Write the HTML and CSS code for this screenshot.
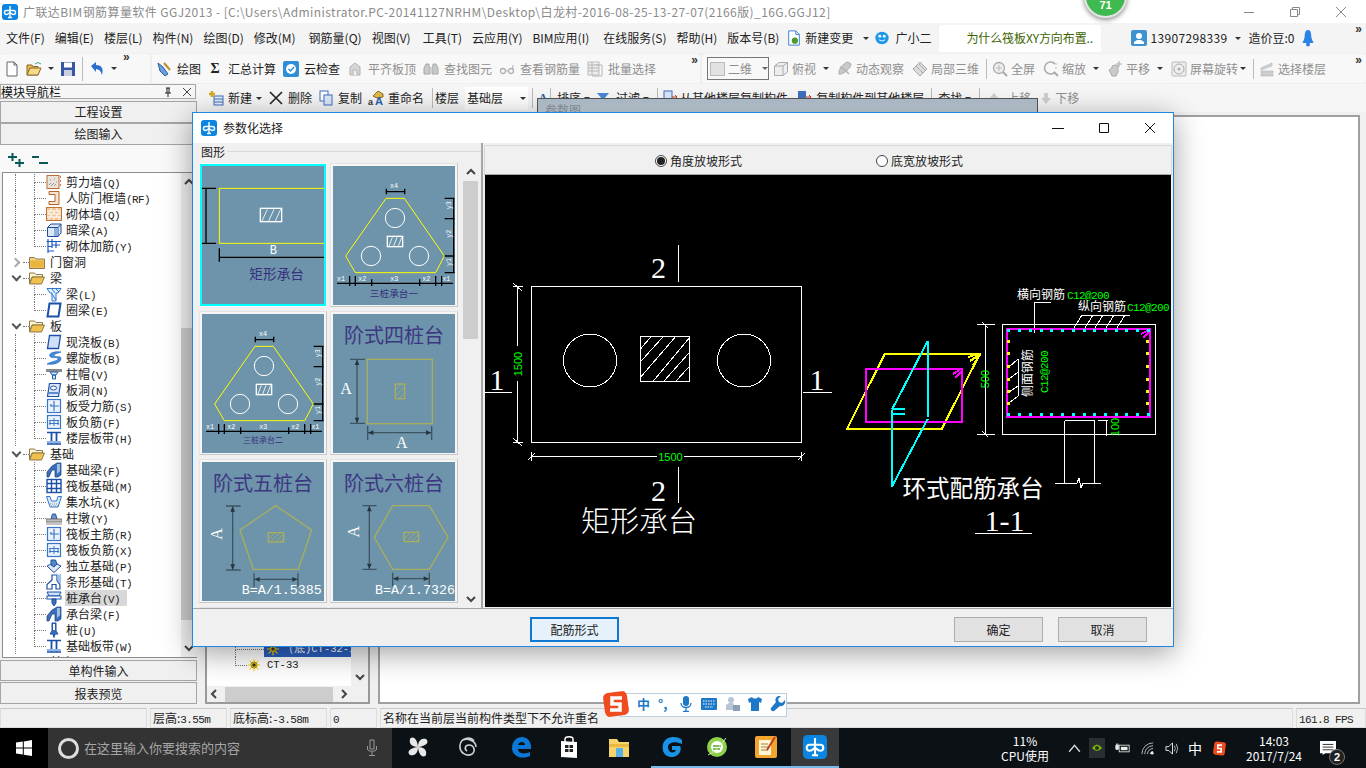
FILE: index.html
```html
<!DOCTYPE html>
<html lang="zh">
<head>
<meta charset="utf-8">
<title>广联达BIM钢筋算量软件 GGJ2013</title>
<link rel="stylesheet" href="styles.css">
</head>
<body>
<svg class="sprite" xmlns="http://www.w3.org/2000/svg">
<defs>
<symbol id="logo" viewBox="0 0 16 16"><rect width="16" height="16" rx="3" fill="#0a86e2"/><path d="M8 2V13.500M8 6.500H4.500C1.800 6.500 1.800 10.500 4.500 10.500C6.300 10.500 7 9 8 8.500C9 9 9.700 10.500 11.500 10.500C14.200 10.500 14.200 6.500 11.500 6.500H8M6 13.500H10" fill="none" stroke="#fff" stroke-width="1.400"/></symbol>
<symbol id="i-shear" viewBox="0 0 16 16"><rect x="1" y="1.500" width="12" height="13" fill="#e9e3dc" stroke="#bd6a36"/><path d="M3 11l2-2M5 12l3-3M8 12l2-2M4 6h1M8 5h1M10 8h1" stroke="#999"/><path d="M14.500 2v12" stroke="#d5803c" stroke-dasharray="2 2"/></symbol>
<symbol id="i-door" viewBox="0 0 16 16"><path d="M3 1.500H13V14.500H3V11.500H9V4.500H3Z" fill="#f6e3cf" stroke="#b8642a"/></symbol>
<symbol id="i-brick" viewBox="0 0 16 16"><rect x=".5" y="1.500" width="15" height="13" fill="#f3c79b" stroke="#bd7536"/><path d="M1 5h14M1 8h14M1 11h14M5 2v3M11 2v3M3 5v3M8 5v3M13 5v3M5 8v3M11 8v3M3 11v3M8 11v3M13 11v3" stroke="#fff"/></symbol>
<symbol id="i-dark" viewBox="0 0 16 16"><path d="M1.500 5.500L5 2H15V11L12 14.500H1.500Z" fill="#dbe7f4" stroke="#1f4f9c"/><path d="M1.500 5.500H12V14.500M12 5.500L15 2" fill="none" stroke="#1f4f9c"/><rect x="8" y="6" width="4" height="8" fill="#8fb2dd"/></symbol>
<symbol id="i-rebar" viewBox="0 0 16 16"><path d="M.5 3.500H15M2 1V15M2 13H8M6 1V10M10 3.500V10M6 7H14M2 8.500H6" fill="none" stroke="#1c58c4" stroke-width="1.200"/></symbol>
<symbol id="i-beam" viewBox="0 0 16 16"><path d="M1 2.500H15L12 7H10V15H6V7H4Z" fill="#e3eefb" stroke="#2f78d0"/><path d="M6 3L9 7M10 3L13 6M6 8L10 14" stroke="#2f78d0"/></symbol>
<symbol id="i-ring" viewBox="0 0 16 16"><path d="M3.500 1.500H14.500L12.500 14.500H1.500Z" fill="#fff" stroke="#1b4fa8" stroke-width="2"/></symbol>
<symbol id="i-slab" viewBox="0 0 16 16"><path d="M3.500 1.500H14.500L12.500 14.500H1.500Z" fill="#cfe0f6" stroke="#1b4fa8" stroke-width="1.300"/></symbol>
<symbol id="i-spiral" viewBox="0 0 16 16"><path d="M15 2C9 1 2 3 4 6.500C6 9 12 6 12 9C12 11 6 11 1 14C7 15 15 13 15 8.500C15 5 8 8 8 5.500C8 4 12 3 15 2Z" fill="#3f8fe0" stroke="#1b58b0" stroke-width=".6"/></symbol>
<symbol id="i-cap" viewBox="0 0 16 16"><rect y="3" width="16" height="3" fill="#8a8a8a"/><path d="M4 6H12L10 9H6ZM6.500 9H9.500V13H6.500Z" fill="#d7e6f6" stroke="#1f5fb0"/></symbol>
<symbol id="i-hole" viewBox="0 0 16 16"><path d="M3.500 1.500H14.500L12.500 14.500H1.500Z" fill="#dce8f8" stroke="#1b4fa8" stroke-width="1.200"/><ellipse cx="7.500" cy="6" rx="3" ry="2" fill="#fff" stroke="#1b4fa8"/><path d="M3 11H12" stroke="#5a8ad0" stroke-width="2"/></symbol>
<symbol id="i-force" viewBox="0 0 16 16"><rect x="1.500" y="1.500" width="13" height="13" fill="#eaf2fc" stroke="#3a76c8" stroke-width="1.200"/><path d="M8 3V13M8 8H13M4 8H8M5 6V8" fill="none" stroke="#3a76c8" stroke-width="1.200"/></symbol>
<symbol id="i-neg" viewBox="0 0 16 16"><rect x="1.500" y="1.500" width="13" height="13" fill="#eaf2fc" stroke="#3a76c8" stroke-width="1.200"/><path d="M3 6.500H13M4 6.500V11M12 6.500V11M8 4V12M3 9.500H13" fill="none" stroke="#3a76c8"/></symbol>
<symbol id="i-strip" viewBox="0 0 16 16"><path d="M1 2.500H15M1 14H15" stroke="#1b4fa8" stroke-width="1.600"/><path d="M5.500 3V13.500M10.500 3V13.500" stroke="#1b4fa8" stroke-width="1.800"/><rect x="1" y="11" width="14" height="2" fill="#8fb6e8"/></symbol>
<symbol id="i-fbeam" viewBox="0 0 16 16"><path d="M1 15V10L6 4L11 1H15V13L12 15H9V8H6L3 15Z" fill="#3a6eb8" stroke="#17407f" stroke-width=".7"/><path d="M11 2V12L14 9V2Z" fill="#9cc0ea"/></symbol>
<symbol id="i-raft" viewBox="0 0 16 16"><rect x="1" y="1.500" width="14" height="13" fill="#fff" stroke="#1b4fa8" stroke-width="1.400"/><path d="M1 5.500H15M1 10.500H15M5.500 2V14M10.500 2V14" stroke="#1b4fa8" stroke-width="1.400"/></symbol>
<symbol id="i-pit" viewBox="0 0 16 16"><path d="M.5 2.500H4L5.500 7H10.500L12 2.500H15.500L12 13H4Z" fill="#dbe8f8" stroke="#2f78d0"/><path d="M4 10H12M3 12H13" stroke="#999" stroke-dasharray="1 1"/></symbol>
<symbol id="i-pier" viewBox="0 0 16 16"><path d="M5 9L6.500 4H9.500L11 9Z" fill="#6f97c8" stroke="#1b4fa8"/><rect y="9" width="16" height="3" fill="#bdbdbd" stroke="#777"/><path d="M0 14H16" stroke="#888"/></symbol>
<symbol id="i-indep" viewBox="0 0 16 16"><path d="M1 8L8 4.500L15 8L8 14.500Z" fill="#dfe9f6" stroke="#1b4fa8"/><path d="M5 2H9.500L11 6L8 9L5 7Z" fill="#5588c6" stroke="#1b4fa8"/></symbol>
<symbol id="i-stripf" viewBox="0 0 16 16"><path d="M1 15V10.500L6 6V1H11V6.500L14 11V15H10V10.500H6V15Z" fill="#fff" stroke="#1b4fa8" stroke-width="1.200"/><path d="M11 1L15 0V10L12 8Z" fill="#9cc0ea"/></symbol>
<symbol id="i-pilecap" viewBox="0 0 16 16"><path d="M1 2H15L13 6H3Z" fill="#cfe0f6" stroke="#1b4fa8"/><rect x="1" y="6" width="14" height="3" fill="#fff" stroke="#1b4fa8"/><path d="M6 9H10V13L8 16L6 13Z" fill="#3a6eb8" stroke="#1b4fa8"/></symbol>
<symbol id="i-pile" viewBox="0 0 16 16"><path d="M6 1H10V9L12 12H9L8 15.500L7 12H4L6 9Z" fill="#3a6eb8" stroke="#1b4fa8"/><rect x="7" y="2" width="2" height="6" fill="#fff"/></symbol>
<symbol id="i-folder" viewBox="0 0 16 16"><path d="M.5 3.500H5.500L7 5H15.500V14.500H.5Z" fill="#f3d27a" stroke="#8d7a50"/><path d="M1.500 6.500H14.500V13.500H1.500Z" fill="#e9b53d"/></symbol>
<symbol id="i-fopen" viewBox="0 0 16 16"><path d="M.5 3H5.500L7 4.500H13.500V7H3L.5 13.500Z" fill="#fff3cc" stroke="#8d7a50"/><path d="M3.500 7H15.500L12.500 14H.5Z" fill="#efc04c" stroke="#8d7a50"/></symbol>
<symbol id="i-ct" viewBox="0 0 16 16"><circle cx="8" cy="8" r="3.500" fill="#ffe600" stroke="#444"/><path d="M8 1V15M1 8H15M3 3L13 13M13 3L3 13" stroke="#ffd800" stroke-width="1.300"/><circle cx="8" cy="8" r="2" fill="#333"/></symbol>
<symbol id="t-gray" viewBox="0 0 16 16"><path d="M3 14V6L8 2L13 6V14Z" fill="#d6d6d6" stroke="#b0b0b0"/><path d="M6 14V9H10V14" fill="#efefef" stroke="#b5b5b5"/></symbol>
<symbol id="t-bino" viewBox="0 0 16 16"><path d="M3 3H6V6H7V13H1V7ZM10 3H13L15 7V13H9V6H10Z" fill="#c9c9c9" stroke="#a8a8a8"/></symbol>
<symbol id="t-glass" viewBox="0 0 16 16"><circle cx="4" cy="10" r="2.500" fill="none" stroke="#b0b0b0" stroke-width="1.300"/><circle cx="12" cy="10" r="2.500" fill="none" stroke="#b0b0b0" stroke-width="1.300"/><path d="M6.500 10H9.500M14 4L13.500 9" stroke="#b0b0b0"/></symbol>
<symbol id="t-batch" viewBox="0 0 16 16"><rect x="1" y="1" width="11" height="13" fill="#eee" stroke="#bbb"/><path d="M1 4H12M1 7H12M1 10H12M5 1V14M9 4H15V15H5" fill="none" stroke="#b5b5b5"/></symbol>
<symbol id="t-cube" viewBox="0 0 16 16"><path d="M1.500 5L6 1.500H14.500V11L10 14.500H1.500Z" fill="#eee" stroke="#aaa"/><path d="M1.500 5H10V14.500M10 5L14.500 1.500" fill="none" stroke="#aaa"/></symbol>
<symbol id="t-orbit" viewBox="0 0 16 16"><path d="M2 13C6 14 14 7 14 3L11 1C6 2 1 9 2 13Z" fill="#c9c9c9" stroke="#aaa"/><path d="M3 6C6 7 10 11 12 13" fill="none" stroke="#b5b5b5" stroke-width="1.500"/></symbol>
<symbol id="t-local" viewBox="0 0 16 16"><path d="M1 8L8 1L15 8L8 15Z" fill="#dcdcdc" stroke="#aaa"/><path d="M4 5L11 12M7 3L13 9" stroke="#aaa"/></symbol>
<symbol id="t-zoom" viewBox="0 0 16 16"><circle cx="7" cy="7" r="5.500" fill="#eee" stroke="#aaa" stroke-width="1.300"/><path d="M11 11L15 15" stroke="#aaa" stroke-width="2"/><path d="M7 4V10M4 7H10" stroke="#bbb"/></symbol>
<symbol id="t-zoom2" viewBox="0 0 16 16"><path d="M12 3A6 6 0 1 0 12 11" fill="none" stroke="#aaa" stroke-width="1.500"/><path d="M11 11L15 15" stroke="#aaa" stroke-width="2"/><path d="M13 2V4M13 6V8" stroke="#bbb"/></symbol>
<symbol id="t-pan" viewBox="0 0 16 16"><path d="M5 15L2 9L5 7V5L8 4L11 5V11L9 15Z" fill="#cacaca" stroke="#aaa"/><path d="M12 0V6M9 3H15" stroke="#aaa"/></symbol>
<symbol id="t-rot" viewBox="0 0 16 16"><rect x="1" y="1" width="14" height="14" rx="1" fill="#eee" stroke="#bbb"/><circle cx="8" cy="8" r="5" fill="none" stroke="#aaa"/><circle cx="8" cy="8" r="1.500" fill="#aaa"/></symbol>
<symbol id="t-floor" viewBox="0 0 16 16"><path d="M2 7L13 2V5L2 9ZM2 10H14V12H2ZM2 13H14V15H2Z" fill="#d3d3d3" stroke="#b0b0b0" stroke-width=".6"/></symbol>
<symbol id="tri" viewBox="0 0 366 417">
  <path class="ye" d="M159 97H214L334 270L308 320H67L38 270Z"/>
  <circle class="wc2" cx="186" cy="156" r="29"/><circle class="wc2" cx="114" cy="270" r="29"/><circle class="wc2" cx="258" cy="270" r="29"/>
  <rect class="wh" x="163" y="211" width="46" height="31"/>
  <path class="wh thin" d="M168 240L178 214M182 240L192 214M196 240L206 214"/>
  <path class="bk" d="M160 68V85M215 68V85M160 77H215M362 97V320M335 97H365M335 158H365M335 270H365M335 320H365M12 352H360M50 330V360M67 330V360M116 340V360M260 340V360M308 330V360M326 330V360"/>
  <text class="lbl-w mono" x="183" y="66" font-size="20" text-anchor="middle">x4</text>
  <text class="lbl-w mono" x="24" y="345" font-size="20" text-anchor="middle">x1</text>
  <text class="lbl-w mono" x="88" y="345" font-size="20" text-anchor="middle">x2</text>
  <text class="lbl-w mono" x="184" y="345" font-size="20" text-anchor="middle">x3</text>
  <text class="lbl-w mono" x="280" y="345" font-size="20" text-anchor="middle">x2</text>
  <text class="lbl-w mono" x="340" y="345" font-size="20" text-anchor="middle">x1</text>
  <text class="lbl-w mono" x="348" y="135" font-size="20" transform="rotate(-90 348 130)">y3</text>
  <text class="lbl-w mono" x="348" y="220" font-size="20" transform="rotate(-90 348 215)">y2</text>
  <text class="lbl-w mono" x="348" y="305" font-size="20" transform="rotate(-90 348 300)">y1</text>
</symbol>
</defs>
</svg>

<div class="app">
  <header class="titlebar">
    <svg class="logo16"><use href="#logo"/></svg>
    <span class="title-text">广联达BIM钢筋算量软件 GGJ2013 - [C:\Users\Administrator.PC-20141127NRHM\Desktop\白龙村-2016-08-25-13-27-07(2166版)_16G.GGJ12]</span>
    <div class="winctl">
      <svg class="wc" viewBox="0 0 12 12"><path d="M1 6.500H11"/></svg>
      <svg class="wc" viewBox="0 0 12 12"><path d="M1.500 3.500H8.500V10.500H1.500ZM3.500 3.500V1.500H10.500V8.500H8.500"/></svg>
      <svg class="wc" viewBox="0 0 12 12"><path d="M1 1L11 11M11 1L1 11"/></svg>
    </div>
  </header>

  <nav class="menubar">
    <span>文件(F)</span><span>编辑(E)</span><span>楼层(L)</span><span>构件(N)</span><span>绘图(D)</span><span>修改(M)</span><span class="mx3">钢筋量(Q)</span><span>视图(V)</span><span class="mx2">工具(T)</span><span>云应用(Y)</span><span>BIM应用(I)</span><span class="mx4">在线服务(S)</span><span>帮助(H)</span><span>版本号(B)</span>
    <span class="mi change"><svg class="ic16" viewBox="0 0 16 18"><path d="M2 1H10L14 5V17H2Z" fill="#fff" stroke="#2a7ad0"/><path d="M10 1V5H14" fill="none" stroke="#2a7ad0"/><circle cx="9" cy="12" r="3.500" fill="#4c9a2a"/></svg>新建变更<i class="caret"></i></span>
    <span class="mi tight"><svg class="ic16" viewBox="0 0 16 18"><ellipse cx="8" cy="9" rx="7.500" ry="7" fill="#1d97ea"/><circle cx="5.500" cy="7" r="1.600" fill="#fff"/><circle cx="10.500" cy="7" r="1.600" fill="#fff"/><path d="M4.500 11Q8 14 11.500 11" fill="none" stroke="#fff"/></svg>广小二</span>
    <span class="notice">为什么筏板XY方向布置..</span>
    <span class="mi user"><svg class="ic16" viewBox="0 0 16 16"><rect width="16" height="16" rx="2" fill="#3e92d2"/><circle cx="8" cy="6" r="3" fill="#fff"/><path d="M3 14V12L6 10H10L13 12V14Z" fill="#fff"/></svg><span class="phone">13907298339</span><i class="caret"></i></span>
    <span class="bean">造价豆:0</span>
    <svg class="bell" viewBox="0 0 12 18"><path d="M6 1C3 1 3 4 2.500 9L.5 14H11.500L9.500 9C9 4 9 1 6 1Z" fill="#2b83e6"/><circle cx="6" cy="15.500" r="2" fill="#2b83e6"/></svg>
    <span class="more end">»</span>
  </nav>

  <div class="toolbar">
    <div class="group g-a">
      <svg class="ic16 m" viewBox="0 0 16 16"><path d="M3 1H10L13 4V15H3Z" fill="#fff" stroke="#666"/><path d="M10 1V4H13" fill="none" stroke="#666"/></svg>
      <svg class="ic16 m" viewBox="0 0 16 16"><path d="M1 14V4H6L7 5.500H12V14Z" fill="#e9b84a" stroke="#8a6a2a"/><path d="M4 7H15L12 14H1Z" fill="#f6d98a" stroke="#8a6a2a"/><path d="M9 3Q12 0 15 3" fill="none" stroke="#3a7"/></svg>
      <i class="caret"></i>
      <svg class="ic16 m" viewBox="0 0 16 16"><rect x="1" y="1" width="14" height="14" fill="#3856a8"/><rect x="4" y="1.500" width="8" height="5" fill="#fff"/><rect x="4" y="9" width="8" height="6" fill="#c7cfe0"/></svg>
      <i class="sep tall"></i>
      <svg class="ic16 m" viewBox="0 0 16 16"><path d="M2 5L7 1V4C12 4 15 7 13 14C12 10 10 8 7 8V11Z" fill="#2a6fd0"/></svg>
      <i class="caret"></i>
      <span class="more">»</span>
    </div>
    <div class="group g-b">
      <span class="tool"><svg class="ic16" viewBox="0 0 16 16"><path d="M2 2L7 6L12 13L9 15L4 10Z" fill="#6aa0dc" stroke="#2c5ea0"/><path d="M8 2L14 9" stroke="#c38a2a" stroke-width="2"/></svg>绘图</span>
      <span class="tool"><b class="sigma">Σ</b>汇总计算</span>
      <span class="tool"><svg class="ic16" viewBox="0 0 16 16"><rect width="16" height="16" rx="2" fill="#2f8ed8"/><circle cx="8" cy="8" r="5" fill="#fff"/><path d="M5.500 8L7.500 10L11 6" fill="none" stroke="#2f8ed8" stroke-width="1.500"/></svg>云检查</span>
      <span class="tool off"><svg class="ic16"><use href="#t-gray"/></svg>平齐板顶</span>
      <span class="tool off"><svg class="ic16"><use href="#t-bino"/></svg>查找图元</span>
      <span class="tool off"><svg class="ic16"><use href="#t-glass"/></svg>查看钢筋量</span>
      <span class="tool off"><svg class="ic16"><use href="#t-batch"/></svg>批量选择</span>
      <span class="more end2">»</span>
    </div>
    <div class="group g-c">
      <span class="combo2"><i class="chk"></i>二维<i class="caret"></i></span>
      <span class="tool off first"><svg class="ic16"><use href="#t-cube"/></svg>俯视<i class="caret"></i></span>
      <span class="tool off"><svg class="ic16"><use href="#t-orbit"/></svg>动态观察</span>
      <span class="tool off"><svg class="ic16"><use href="#t-local"/></svg>局部三维</span>
      <i class="sep"></i>
      <span class="tool off"><svg class="ic16"><use href="#t-zoom"/></svg>全屏</span>
      <span class="tool off"><svg class="ic16"><use href="#t-zoom2"/></svg>缩放<i class="caret"></i></span>
      <span class="tool off"><svg class="ic16"><use href="#t-pan"/></svg>平移<i class="caret"></i></span>
      <span class="tool off lastc"><svg class="ic16"><use href="#t-rot"/></svg>屏幕旋转<i class="caret"></i></span>
      <i class="sep"></i>
      <span class="tool off"><svg class="ic16"><use href="#t-floor"/></svg>选择楼层</span>
      <span class="more end">»</span>
    </div>
  </div>

  <main class="workspace">
    <aside class="nav">
      <div class="nav-head"><span>模块导航栏</span><span class="nav-btns"><svg class="ic10" viewBox="0 0 10 10"><path d="M3 1H7M4 1V6M6 1V6M2 6H8M5 6V10" fill="none" stroke="#222"/></svg><svg class="ic10" viewBox="0 0 10 10"><path d="M1 1L9 9M9 1L1 9" stroke="#444"/></svg></span></div>
      <button class="navbtn">工程设置</button>
      <button class="navbtn second">绘图输入</button>
      <div class="expand">
        <svg class="pm" viewBox="0 0 18 16"><path d="M1 5H10M5.500 1V9M8 11H17M12.500 7V15" stroke="#0a5a55" stroke-width="2"/></svg>
        <svg class="pm" viewBox="0 0 18 16"><path d="M1 5H8M8 11H17" stroke="#0a5a55" stroke-width="2"/></svg>
      </div>
      <div class="tree">
        <div class="rows">
          <div class="row"><i class="gut"></i><i class="elbow"></i><svg class="ti"><use href="#i-shear"/></svg><span>剪力墙<em>(Q)</em></span></div>
          <div class="row"><i class="gut"></i><i class="elbow"></i><svg class="ti"><use href="#i-door"/></svg><span>人防门框墙<em>(RF)</em></span></div>
          <div class="row"><i class="gut"></i><i class="elbow"></i><svg class="ti"><use href="#i-brick"/></svg><span>砌体墙<em>(Q)</em></span></div>
          <div class="row"><i class="gut"></i><i class="elbow"></i><svg class="ti"><use href="#i-dark"/></svg><span>暗梁<em>(A)</em></span></div>
          <div class="row"><i class="gut"></i><i class="elbow last"></i><svg class="ti"><use href="#i-rebar"/></svg><span>砌体加筋<em>(Y)</em></span></div>
          <div class="row l1"><i class="chev closed"></i><i class="dash"></i><svg class="ti"><use href="#i-folder"/></svg><span>门窗洞</span></div>
          <div class="row l1"><i class="chev"></i><i class="dash"></i><svg class="ti"><use href="#i-fopen"/></svg><span>梁</span></div>
          <div class="row"><i class="gut none"></i><i class="elbow"></i><svg class="ti"><use href="#i-beam"/></svg><span>梁<em>(L)</em></span></div>
          <div class="row"><i class="gut none"></i><i class="elbow last"></i><svg class="ti"><use href="#i-ring"/></svg><span>圈梁<em>(E)</em></span></div>
          <div class="row l1"><i class="chev"></i><i class="dash"></i><svg class="ti"><use href="#i-fopen"/></svg><span>板</span></div>
          <div class="row"><i class="gut"></i><i class="elbow"></i><svg class="ti"><use href="#i-slab"/></svg><span>现浇板<em>(B)</em></span></div>
          <div class="row"><i class="gut"></i><i class="elbow"></i><svg class="ti"><use href="#i-spiral"/></svg><span>螺旋板<em>(B)</em></span></div>
          <div class="row"><i class="gut"></i><i class="elbow"></i><svg class="ti"><use href="#i-cap"/></svg><span>柱帽<em>(V)</em></span></div>
          <div class="row"><i class="gut"></i><i class="elbow"></i><svg class="ti"><use href="#i-hole"/></svg><span>板洞<em>(N)</em></span></div>
          <div class="row"><i class="gut"></i><i class="elbow"></i><svg class="ti"><use href="#i-force"/></svg><span>板受力筋<em>(S)</em></span></div>
          <div class="row"><i class="gut"></i><i class="elbow"></i><svg class="ti"><use href="#i-neg"/></svg><span>板负筋<em>(F)</em></span></div>
          <div class="row"><i class="gut"></i><i class="elbow last"></i><svg class="ti"><use href="#i-strip"/></svg><span>楼层板带<em>(H)</em></span></div>
          <div class="row l1"><i class="chev"></i><i class="dash"></i><svg class="ti"><use href="#i-fopen"/></svg><span>基础</span></div>
          <div class="row"><i class="gut"></i><i class="elbow"></i><svg class="ti"><use href="#i-fbeam"/></svg><span>基础梁<em>(F)</em></span></div>
          <div class="row"><i class="gut"></i><i class="elbow"></i><svg class="ti"><use href="#i-raft"/></svg><span>筏板基础<em>(M)</em></span></div>
          <div class="row"><i class="gut"></i><i class="elbow"></i><svg class="ti"><use href="#i-pit"/></svg><span>集水坑<em>(K)</em></span></div>
          <div class="row"><i class="gut"></i><i class="elbow"></i><svg class="ti"><use href="#i-pier"/></svg><span>柱墩<em>(Y)</em></span></div>
          <div class="row"><i class="gut"></i><i class="elbow"></i><svg class="ti"><use href="#i-force"/></svg><span>筏板主筋<em>(R)</em></span></div>
          <div class="row"><i class="gut"></i><i class="elbow"></i><svg class="ti"><use href="#i-neg"/></svg><span>筏板负筋<em>(X)</em></span></div>
          <div class="row"><i class="gut"></i><i class="elbow"></i><svg class="ti"><use href="#i-indep"/></svg><span>独立基础<em>(P)</em></span></div>
          <div class="row"><i class="gut"></i><i class="elbow"></i><svg class="ti"><use href="#i-stripf"/></svg><span>条形基础<em>(T)</em></span></div>
          <div class="row"><i class="gut"></i><i class="elbow"></i><svg class="ti"><use href="#i-pilecap"/></svg><span class="sel">桩承台<em>(V)</em></span></div>
          <div class="row"><i class="gut"></i><i class="elbow"></i><svg class="ti"><use href="#i-fbeam"/></svg><span>承台梁<em>(F)</em></span></div>
          <div class="row"><i class="gut"></i><i class="elbow"></i><svg class="ti"><use href="#i-pile"/></svg><span>桩<em>(U)</em></span></div>
          <div class="row"><i class="gut"></i><i class="elbow last"></i><svg class="ti"><use href="#i-strip"/></svg><span>基础板带<em>(W)</em></span></div>
          <div class="row l1"><i class="chev closed"></i><i class="dash"></i><svg class="ti"><use href="#i-folder"/></svg><span>其它</span></div>
        </div>
        <div class="vscroll tree-sb">
          <svg class="arrow" viewBox="0 0 10 8"><path d="M1 6L5 2L9 6" fill="none" stroke="#444" stroke-width="2"/></svg>
          <div class="track"><div class="thumb tree-thumb"></div></div>
          <svg class="arrow" viewBox="0 0 10 8"><path d="M1 2L5 6L9 2" fill="none" stroke="#444" stroke-width="2"/></svg>
        </div>
      </div>
      <button class="navbtn low">单构件输入</button>
      <button class="navbtn low">报表预览</button>
    </aside>

    <section class="right">
      <div class="toolbar2">
        <span class="tool"><svg class="ic16" viewBox="0 0 16 16"><rect x="6" y="6" width="9" height="9" fill="#e7eefb" stroke="#3e6fc0"/><path d="M6 9H15M6 12H15" stroke="#3e6fc0"/><path d="M1 4H7M4 1V7" stroke="#d9a820" stroke-width="2.500"/></svg>新建<i class="caret"></i></span>
        <span class="tool"><svg class="ic16" viewBox="0 0 16 16"><path d="M2 2L14 14M14 2L2 14" stroke="#222" stroke-width="1.600"/></svg>删除</span>
        <span class="tool"><svg class="ic16" viewBox="0 0 16 16"><rect x="2" y="1" width="8" height="10" fill="#fff" stroke="#3e6fc0"/><rect x="6" y="5" width="8" height="10" fill="#dbe6f8" stroke="#3e6fc0"/></svg>复制</span>
        <span class="tool"><svg class="ic16" viewBox="0 0 16 16"><path d="M5 6L10 1L15 4V7L9 8Z" fill="#e3b94a" stroke="#8a6a20"/><text class="rn" x="0" y="15">a</text><text class="rn blue" x="7" y="15">A</text></svg>重命名</span>
        <i class="sep sa1"></i>
        <span class="plain">楼层</span>
        <span class="floorsel">基础层<i class="caret"></i></span>
        <i class="sep sa2"></i>
        <svg class="ic12" viewBox="0 0 12 14"><text class="sa" x="2" y="10">A</text></svg>
        <i class="sep sa3"></i>
        <span class="plain">排序<i class="caret"></i></span>
        <span class="tool g6"><svg class="ic14" viewBox="0 0 14 14"><path d="M1 2H13L8 8V13L6 11V8Z" fill="#4a86d8"/></svg>过滤<i class="caret"></i></span>
        <i class="sep sa4"></i>
        <span class="tool g2"><svg class="ic16" viewBox="0 0 16 16"><rect x="2" y="1" width="8" height="12" fill="#dbe6f8" stroke="#3e6fc0"/><path d="M10 7H15M13 5L15 7L13 9" fill="none" stroke="#c83a1a"/></svg>从其他楼层复制构件</span>
        <span class="tool g4 ml2"><svg class="ic16" viewBox="0 0 16 16"><rect x="2" y="1" width="8" height="12" fill="#3e6fc0"/><path d="M10 7H15M13 5L15 7L13 9" fill="none" stroke="#c83a1a"/></svg>复制构件到其他楼层</span>
        <i class="sep sa5"></i>
        <span class="plain">查找<i class="caret"></i></span>
        <i class="sep sa6"></i>
        <span class="tool off g7 ml2"><svg class="ic12" viewBox="0 0 12 14"><path d="M6 2L11 8H8V13H4V8H1Z" fill="#cfcfcf"/></svg>上移</span>
        <span class="tool off g3 ml3"><svg class="ic12" viewBox="0 0 12 14"><path d="M6 13L11 7H8V2H4V7H1Z" fill="#cfcfcf"/></svg>下移</span>
      </div>
      <div class="panes">
        <div class="midpane">
          <div class="midlist">
            <div class="midrows">
              <div class="midrow"><i class="elbow wide"></i><span class="midsel"><svg class="ic14"><use href="#i-ct"/></svg>（底)CT-32-1</span></div>
              <div class="midrow"><i class="elbow last"></i><svg class="ic14"><use href="#i-ct"/></svg><span>CT-33</span></div>
            </div>
            <div class="vscroll mid-sb">
              <div class="track"><div class="thumb mid-thumb"></div></div>
              <svg class="arrow" viewBox="0 0 10 8"><path d="M1 2L5 6L9 2" fill="none" stroke="#444" stroke-width="2"/></svg>
            </div>
          </div>
          <div class="hscroll">
            <svg class="harrow" viewBox="0 0 8 10"><path d="M6 1L2 5L6 9" fill="none" stroke="#444" stroke-width="2"/></svg>
            <div class="hthumb"></div>
            <svg class="harrow" viewBox="0 0 8 10"><path d="M2 1L6 5L2 9" fill="none" stroke="#444" stroke-width="2"/></svg>
          </div>
        </div>
        <div class="canvaspane"></div>
      </div>
    </section>
  </main>

  <footer class="status">
    <span class="s0"></span>
    <span class="s1">层高:<em>3.55m</em></span>
    <span class="s2">底标高:<em>-3.58m</em></span>
    <span class="s3"><em>0</em></span>
    <span class="s4">名称在当前层当前构件类型下不允许重名</span>
    <span class="s5"><em>161.8 FPS</em></span>
  </footer>

  <div class="taskbar">
    <div class="start"><svg class="win" viewBox="0 0 16 16"><path d="M0 2.500L6.800 1.500V7.600H0ZM7.800 1.400L16 0V7.600H7.800ZM0 8.500H6.800V14.600L0 13.600ZM7.800 8.500H16V16L7.800 14.800Z" fill="#fff"/></svg></div>
    <div class="search"><i class="cortana"></i><span>在这里输入你要搜索的内容</span><svg class="mic" viewBox="0 0 12 18"><path d="M4 1H8V10H4ZM1.500 7V10C1.500 13 10.500 13 10.500 10V7M6 13V16.500M3 16.500H9" fill="none" stroke="#9a9a9a"/></svg></div>
    <div class="tasks">
      <div class="task"><svg class="tk" viewBox="0 0 24 24"><path d="M12 12C5 12 3 8 4 4C6 1 11 2 12 12ZM12 12C12 5 16 3 20 4C23 6 22 11 12 12ZM12 12C19 12 21 16 20 20C18 23 13 22 12 12ZM12 12C12 19 8 21 4 20C1 18 2 13 12 12Z" fill="#e8e8e8"/></svg></div>
      <div class="task"><svg class="tk" viewBox="0 0 24 24"><path d="M19 6C15 1 6 3 5 10C4 18 12 22 17 19C21 16 19 10 14 10C10 10 9 14 12 16M8 5C13 3 21 6 21 12" fill="none" stroke="#cfcfcf" stroke-width="1.600"/></svg></div>
      <div class="task"><svg class="tk" viewBox="0 0 24 24"><path d="M3 13C3 5 9 2 13 2C18 2 22 6 22 12V14H9C9 18 14 20 21 17V21C12 25 3 21 3 13ZM9 10H16C16 6 10 6 9 10Z" fill="#0a78d4"/></svg></div>
      <div class="task"><svg class="tk" viewBox="0 0 24 24"><path d="M8 7V4C8 1 16 1 16 4V7" fill="none" stroke="#fff" stroke-width="1.500"/><path d="M4 6L20 7V23L4 22Z" fill="#fff"/><path d="M8 10H11.500V13H8ZM12.500 10H16V13H12.500ZM8 14H11.500V17H8ZM12.500 14H16V17H12.500Z" fill="#222"/></svg></div>
      <div class="task"><svg class="tk" viewBox="0 0 24 24"><path d="M2 4H10L12 7H22V22H2Z" fill="#f7d36b"/><rect x="9" y="13" width="7" height="9" fill="#57b0e6"/><rect x="2" y="9" width="20" height="3" fill="#e8b93e"/></svg></div>
      <div class="task run"><svg class="tk" viewBox="0 0 24 24"><path d="M22 5C18 1 6 0 3 9C1 17 6 23 13 22C20 21 22 14 20 11H12V15H16C15 18 9 19 8 13C7 8 14 5 22 9Z" fill="#1993e6"/></svg></div>
      <div class="task run"><svg class="tk" viewBox="0 0 24 24"><circle cx="12" cy="12" r="10" fill="#8ed24b"/><circle cx="12" cy="12" r="6" fill="#fff"/><path d="M8 11H16M8 14H15" stroke="#5aa32a" stroke-width="1.500"/><path d="M3 20Q12 16 21 3" fill="none" stroke="#cfeaa8"/></svg></div>
      <div class="task run"><svg class="tk" viewBox="0 0 24 24"><rect x="1" y="1" width="22" height="22" rx="2" fill="#f2a62e"/><path d="M5 5H17V20H5Z" fill="#fff6d6"/><path d="M7 9H14M7 12H14M7 15H14" stroke="#a08040"/><path d="M21 2L13 15" stroke="#c83a1a" stroke-width="2"/></svg></div>
      <div class="task run act"><svg class="tk"><use href="#logo"/></svg></div>
    </div>
    <div class="tray">
      <div class="cpu"><span>11%</span><span>CPU使用</span></div>
      <svg class="ty car" viewBox="0 0 14 14"><path d="M2 10L7 4L12 10" fill="none" stroke="#ddd" stroke-width="1.200"/></svg>
      <svg class="ty big nv" viewBox="0 0 16 20"><rect width="16" height="20" fill="#2a2e32"/><path d="M3 10Q8 3 13 10Q8 16 3 10Z" fill="#76b900"/><circle cx="8" cy="10" r="2" fill="#2a2e32"/></svg>
      <svg class="ty" viewBox="0 0 18 14"><rect x="5" y="3" width="12" height="8" fill="none" stroke="#eee"/><rect x="7" y="5" width="8" height="4" fill="#eee"/><path d="M1 3H4V8H1ZM2 1V3M3.500 1V3" fill="#eee" stroke="#eee"/></svg>
      <svg class="ty" viewBox="0 0 16 16"><path d="M2 14A12 12 0 0 1 14 2M5 14A9 9 0 0 1 14 5M8 14A6 6 0 0 1 14 8M11 14A3 3 0 0 1 14 11" fill="none" stroke="#bbb"/><circle cx="13" cy="13" r="1.500" fill="#eee"/></svg>
      <svg class="ty" viewBox="0 0 16 16"><path d="M1 6H4L8 2V14L4 10H1Z" fill="none" stroke="#eee"/><path d="M10 5Q12 8 10 11M12 3Q15 8 12 13" fill="none" stroke="#bbb"/></svg>
      <span class="ime-lang">中</span>
      <svg class="ty" viewBox="0 0 16 18"><rect x="1" y="1" width="14" height="16" rx="3" fill="#ef4b1f" transform="rotate(8 8 9)"/><path d="M11 5H6V9H10V13H5" fill="none" stroke="#fff" stroke-width="2"/></svg>
      <div class="clock"><span>14:03</span><span>2017/7/24</span></div>
      <div class="notif"><svg class="ty big" viewBox="0 0 18 16"><path d="M0 0H18V14H6L3 16V14H0Z" fill="#fff"/><path d="M3 4H15M3 7H15M3 10H15" stroke="#222"/></svg><b class="badge">2</b></div>
    </div>
  </div>

  <div class="score"><span>71</span></div>

  <div class="backwin"><span>参数图</span></div>

  <div class="dialog">
    <div class="d-title">
      <svg class="logo16"><use href="#logo"/></svg>
      <span class="d-name">参数化选择</span>
      <div class="d-ctl">
        <svg class="dc" viewBox="0 0 12 12"><path d="M0 6.500H12"/></svg>
        <svg class="dc" viewBox="0 0 12 12"><path d="M1.500 1.500H10.500V10.500H1.500Z"/></svg>
        <svg class="dc" viewBox="0 0 12 12"><path d="M1 1L11 11M11 1L1 11"/></svg>
      </div>
    </div>
    <div class="d-body">
      <div class="d-left">
        <div class="group-label"><span>图形</span><i></i></div>
        <div class="thumbwrap">
          <div class="thumbs">
            <div class="card on"><svg class="shape" viewBox="0 0 366 414">
              <path class="ye" d="M366 67H52V232H366"/>
              <rect class="wh" x="175" y="127" width="64" height="40"/>
              <path class="wh thin" d="M180 165L196 130M200 165L216 130M220 165L236 130"/>
              <path class="bk" d="M12 67V232M0 67H42M0 232H42M52 247V287M52 274H366"/>
              <text class="lbl-w mono" x="214" y="265" font-size="36" text-anchor="middle">B</text>
              <text class="lbl-p" x="224" y="338" font-size="41" text-anchor="middle">矩形承台</text>
            </svg></div>
            <div class="card"><svg class="shape" viewBox="0 0 366 417">
              <use href="#tri"/>
              <text class="lbl-p" x="183" y="392" font-size="29" text-anchor="middle">三桩承台一</text>
            </svg></div>
            <div class="card"><svg class="shape" viewBox="0 0 366 417">
              <use href="#tri"/>
              <text class="lbl-p" x="183" y="388" font-size="24" text-anchor="middle">三桩承台二</text>
            </svg></div>
            <div class="card"><svg class="shape" viewBox="0 0 366 417">
              <text class="lbl-t" x="183" y="86" font-size="60" text-anchor="middle">阶式四桩台</text>
              <rect class="ol" x="103" y="136" width="195" height="193"/>
              <rect class="ol" x="187" y="210" width="28" height="44"/>
              <path class="ol hl" d="M187 228L205 210M187 246L215 218M197 254L215 236"/>
              <path class="dk" d="M72 136V328M51 136H96M51 328H96M104 336V378M296 336V378M104 356H296"/>
              <path class="ah" d="M72 137L65 153H79ZM72 327L65 311H79ZM105 356L121 349V363ZM295 356L279 349V363Z"/>
              <text class="lbl-w serif" x="39" y="240" font-size="48" text-anchor="middle">A</text>
              <text class="lbl-w serif" x="206" y="402" font-size="48" text-anchor="middle">A</text>
            </svg></div>
            <div class="card"><svg class="shape" viewBox="0 0 366 417">
              <text class="lbl-t" x="183" y="86" font-size="60" text-anchor="middle">阶式五桩台</text>
              <path class="ol" d="M221 131L329 204L289 322H154L114 204Z"/>
              <rect class="ol" x="199" y="212" width="46" height="28"/>
              <path class="ol hl" d="M199 232L219 212M206 240L234 212M220 240L245 215M234 240L245 229"/>
              <path class="dk" d="M92 132V324M72 132H116M72 324H116M156 334V374M288 334V374M156 352H288"/>
              <path class="ah" d="M92 133L85 149H99ZM92 323L85 307H99ZM157 352L173 345V359ZM287 352L271 345V359Z"/>
              <text class="lbl-w serif" x="47" y="216" font-size="48" text-anchor="middle" transform="rotate(-90 47 216)" dy="12">A</text>
              <text class="lbl-w mono" x="119" y="397" font-size="40" textLength="240">B=A/1.5385</text>
            </svg></div>
            <div class="card"><svg class="shape" viewBox="0 0 366 417">
              <text class="lbl-t" x="183" y="86" font-size="60" text-anchor="middle">阶式六桩台</text>
              <path class="ol" d="M179 131H289L345 226L289 322H179L124 226Z"/>
              <rect class="ol" x="213" y="211" width="44" height="28"/>
              <path class="ol hl" d="M213 231L233 211M220 239L248 211M234 239L257 216M248 239L257 230"/>
              <path class="dk" d="M109 131V322M89 131H131M89 322H131M179 332V372M289 332V372M179 350H289"/>
              <path class="ah" d="M109 132L102 148H116ZM109 321L102 305H116ZM180 350L196 343V357ZM288 350L272 343V357Z"/>
              <text class="lbl-w serif" x="66" y="209" font-size="48" text-anchor="middle" transform="rotate(-90 66 209)" dy="12">A</text>
              <text class="lbl-w mono" x="126" y="397" font-size="40" textLength="240">B=A/1.7326</text>
            </svg></div>
            <div class="card"></div>
            <div class="card"></div>
          </div>
          <div class="vscroll dlg-sb">
            <svg class="arrow" viewBox="0 0 10 8"><path d="M1 6L5 2L9 6" fill="none" stroke="#444" stroke-width="2"/></svg>
            <div class="track"><div class="thumb dlg-thumb"></div></div>
            <svg class="arrow" viewBox="0 0 10 8"><path d="M1 2L5 6L9 2" fill="none" stroke="#444" stroke-width="2"/></svg>
          </div>
        </div>
      </div>
      <div class="d-right">
        <div class="radios">
          <label class="radio"><i class="dot on"></i>角度放坡形式</label>
          <label class="radio"><i class="dot"></i>底宽放坡形式</label>
        </div>
        <svg class="cad" viewBox="485 176 686 432" shape-rendering="crispEdges">
          <g class="w">
            <rect x="531.500" y="287.500" width="270" height="155.500"/>
            <circle cx="590" cy="361.500" r="26.500"/>
            <circle cx="744" cy="361.500" r="26.500"/>
            <rect x="640.500" y="337.500" width="49" height="45"/>
            <path class="t" d="M640.500 350L650.700 338M640.500 362.700L663.300 337.500M640.500 378.300L675.700 337.500M653.300 382L689 339.300M664 382L689.500 353.300M676 382L689.500 367.300"/>
            <path d="M678.500 246V283M678.500 468V504M485 393.500H512M803 393.500H832"/>
            <path d="M517.500 287V347M517.500 382V443M513 287.500H523M513 443H523M513 284L522 292M513 439L522 447"/>
            <path d="M531 457.500H657M684 457.500H801M531 453V462M801 453V462M528 461L535 454M798 461L805 454"/>
            <path d="M1002 325.500H1155.500V435.500H1002Z"/>
            <path d="M1064.500 421.500V484M1094.500 421.500V484M1064.500 421.500H1094.500M1055 484H1077L1079 479L1081 489L1083 484H1101"/>
            <path d="M985 325.500V435.500M977 325.500H995M977 435.500H995M982 323L988 329M982 432L988 438"/>
            <path d="M1098 421.500H1108M1106 422V437"/>
            <path d="M1034.500 334V303.500H1051"/>
            <path d="M1082 316H1130M1082 316L1072 332M1093 316L1083 332M1103 316L1093 332M1114 316L1104 332M1125 316L1115 332"/>
            <path d="M1018 360V397M1018 360L1009 368M1018 373L1009 380M1018 387L1009 393M1018 397L1009 404"/>
            <path d="M975 534.500H1032"/>
          </g>
          <g class="ye2"><path d="M885 354.500H980L941.700 430H847Z"/><path d="M968 358L980 354.500M970 362L979 356M973 366L980 356"/></g>
          <g class="ma"><rect x="866" y="369.500" width="96" height="53"/><path d="M953 375L961 370M955 379L961 373"/><rect x="1007" y="330" width="143" height="88"/><path d="M1141 335L1149 331M1143 339L1149 333"/></g>
          <g class="cy"><path d="M927.700 342V418M927.700 342L892.300 410M891.700 411V488M891.700 488L927.700 420M892 410H905M892 415H905"/></g>
          <path class="cydots" d="M1007 331.500h3M1018 331.500h3M1029 331.500h3M1040 331.500h3M1050 331.500h3M1061 331.500h3M1072 331.500h3M1083 331.500h3M1093 331.500h3M1104 331.500h3M1115 331.500h3M1125 331.500h3M1136 331.500h3M1147 331.500h3M1007 415.500h3M1018 415.500h3M1029 415.500h3M1040 415.500h3M1050 415.500h3M1061 415.500h3M1072 415.500h3M1083 415.500h3M1093 415.500h3M1104 415.500h3M1115 415.500h3M1125 415.500h3M1136 415.500h3M1147 415.500h3"/>
          <path class="yedots" d="M1007 342.500h3M1007 354.500h3M1007 367.500h3M1007 380.500h3M1007 392.500h3M1007 404.500h3M1146 342.500h3M1146 354.500h3M1146 367.500h3M1146 380.500h3M1146 392.500h3M1146 404.500h3"/>
          <text class="g sm" x="518" y="365" text-anchor="middle" transform="rotate(-90 518 365)" dy="4">1500</text>
          <text class="g sm" x="670.500" y="461.500" text-anchor="middle">1500</text>
          <text class="g sm" x="985" y="380" text-anchor="middle" transform="rotate(-90 985 380)" dy="4">500</text>
          <text class="g sm" x="1115" y="428" text-anchor="middle" transform="rotate(-90 1115 428)" dy="4">100</text>
          <text class="s30" x="658.500" y="279" text-anchor="middle">2</text>
          <text class="s30" x="658.500" y="502" text-anchor="middle">2</text>
          <text class="s30" x="497" y="391" text-anchor="middle">1</text>
          <text class="s30" x="817" y="391" text-anchor="middle">1</text>
          <text class="cn big" x="639" y="533" text-anchor="middle">矩形承台</text>
          <text class="cn mid" x="973" y="498" text-anchor="middle">环式配筋承台</text>
          <text class="s30" x="1004.500" y="532" text-anchor="middle">1-1</text>
          <text class="cn sm12" x="1017" y="300">横向钢筋</text>
          <text class="g mono12" x="1067" y="300">C12@200</text>
          <text class="cn sm12" x="1078" y="312">纵向钢筋</text>
          <text class="g mono12" x="1127" y="312">C12@200</text>
          <text class="cn sm12" x="1028" y="374" text-anchor="middle" transform="rotate(-90 1028 374)" dy="4">侧面钢筋</text>
          <text class="g mono12" x="1044" y="373" text-anchor="middle" transform="rotate(-90 1044 373)" dy="4">C12@200</text>
        </svg>
      </div>
    </div>
    <div class="d-foot">
      <button class="dbtn primary">配筋形式</button>
      <div class="d-actions"><button class="dbtn">确定</button><button class="dbtn">取消</button></div>
    </div>
  </div>

  <div class="imebar">
    <svg class="sg" viewBox="0 0 28 28"><rect x="2" y="2" width="24" height="24" rx="5" fill="#ef4b1f" transform="rotate(-8 14 14)"/><path d="M20 8H10V14H18V20H8" fill="none" stroke="#fff" stroke-width="3.500"/></svg>
    <span class="imechar">中</span>
    <span class="imechar small">°,</span>
    <svg class="ib" viewBox="0 0 14 16"><rect x="4" y="0" width="6" height="10" rx="3" fill="#1d78c8"/><path d="M2 7C2 13 12 13 12 7M7 11.500V15M4 15.500H10" fill="none" stroke="#1d78c8" stroke-width="1.300"/></svg>
    <svg class="ib" viewBox="0 0 16 14"><rect y="1" width="16" height="12" rx="1" fill="#1d78c8"/><path d="M2 4H14M2 7H14M4 10H12" stroke="#fff" stroke-dasharray="1.500 1"/></svg>
    <svg class="ib" viewBox="0 0 16 16"><circle cx="7" cy="4" r="3" fill="#b6c6d6"/><path d="M2 14V9L5 7H9L10 9V14Z" fill="#b6c6d6"/><rect x="9" y="9" width="7" height="6" fill="#8aa0b6"/></svg>
    <svg class="ib" viewBox="0 0 16 16"><path d="M5 1L1 3L2 7L4 6V15H12V6L14 7L15 3L11 1C10 3 6 3 5 1Z" fill="#1d78c8"/></svg>
    <svg class="ib" viewBox="0 0 16 16"><path d="M15 4L12 7L9 6L8 3L11 0C7 -1 4 3 6 6L1 12C0 14 2 16 4 15L10 10C13 11 16 8 15 4Z" fill="#1d78c8"/></svg>
  </div>
</div>
</body>
</html>
```

FILE: styles.css
```css
* { box-sizing: border-box; }
html, body { margin: 0; padding: 0; width: 1366px; height: 768px; overflow: hidden; }
body { font: 12px/16px "Noto Sans CJK SC", "Liberation Sans", sans-serif; color: #222; background: #f0f0f0; }
.sprite { width: 0; height: 0; position: absolute; }
svg { display: block; flex: none; }
i { display: block; font-style: normal; flex: none; }
em { font: 11px/16px "Liberation Mono", monospace; letter-spacing: -.6px; }
button { font: inherit; color: inherit; }

.app { position: relative; width: 1366px; height: 768px; display: flex; flex-direction: column; overflow: hidden; }

.titlebar { height: 23px; background: #fff; display: flex; align-items: center; padding-left: 2px; color: #8b8b8b; flex: none; }
.logo16 { width: 16px; height: 16px; }
.title-text { margin-left: 5px; letter-spacing: .42px; white-space: nowrap; }
.winctl { margin-left: auto; display: flex; margin-right: 19px; gap: 34px; }
.wc { width: 12px; height: 12px; fill: none; stroke: #888; }

.menubar { height: 30px; background: #f4f4f4; display: flex; align-items: center; padding-left: 6px; gap: 10px; white-space: nowrap; flex: none; }
.mx3 { margin-left: 3px; }
.mx2 { margin-left: 2px; }
.mx4 { margin-left: 4px; }
.mi { display: flex; align-items: center; gap: 3px; }
.mi.change { margin-left: -3px; }
.mi.tight { margin-left: -5px; gap: 5px; }
.ic16 { width: 16px; height: 16px; }
.caret { width: 0; height: 0; border: 3px solid transparent; border-top: 3px solid #333; border-bottom: 0; margin-left: 7px; }
.notice { width: 162px; height: 27px; background: #fff; border-radius: 3px; color: #3c6400; display: flex; align-items: center; padding-left: 27px; margin-left: -2px; letter-spacing: -.1px; }
.user { margin-left: 20px; }
.phone { letter-spacing: .35px; }
.user .caret { margin-left: 4px; }
.bean { margin-left: -2px; }
.bell { width: 12px; height: 18px; margin-left: -3px; }
.more { font: bold 12px/12px "Liberation Sans", sans-serif; color: #333; align-self: flex-start; margin-top: -3px; }
.end { margin-left: auto; margin-right: 4px; margin-top: 0; }

.toolbar { height: 31px; display: flex; align-items: center; gap: 2px; background: #efefef; flex: none; }
.group { height: 29px; display: flex; align-items: center; gap: 7px; background: #f8f8f8; border-radius: 3px; }
.g-a { width: 150px; padding-left: 4px; gap: 6px; }
.g-a .caret { margin-left: 0; }
.g-b { width: 548px; padding-left: 4px; }
.g-c { flex: 1; padding-left: 5px; gap: 8px; }
.end2 { margin-left: auto; margin-right: 2px; margin-top: 0; }
.sep { width: 1px; height: 20px; background: #bbb; }
.sep.tall { height: 24px; }
.tool { display: flex; align-items: center; gap: 5px; white-space: nowrap; }
.tool .caret { margin-left: 4px; }
.g-c .tool { gap: 3px; }
.g-c .tool.first { margin-left: -4px; }
.g-c .tool .caret { margin-left: 4px; }
.g-c .tool.lastc .caret { margin-left: -1px; }
.g-c > .sep { margin: 0 -3px 0 -1px; }
.off { color: #8f8f8f; }
.sigma { font: bold 14px/16px "Liberation Serif", serif; width: 14px; text-align: center; margin-right: 1px; }
.combo2 { width: 62px; height: 23px; border: 1px solid #777; display: flex; align-items: center; padding-left: 2px; color: #8f8f8f; gap: 3px; white-space: nowrap; }
.chk { width: 15px; height: 14px; background: #e2e2e2; border: 1px solid #bbb; }
.combo2 .caret { margin-left: 7px; border-top-color: #666; }

.workspace { flex: 1; display: flex; min-height: 0; }
.nav { width: 197px; display: flex; flex-direction: column; flex: none; }
.nav-head { height: 15px; margin-right: 1px; border: 1px solid #a8a8a8; background: #f6f6f6; display: flex; align-items: center; justify-content: space-between; line-height: 13px; padding-right: 3px; color: #111; }
.nav-btns { display: flex; gap: 9px; }
.ic10 { width: 10px; height: 10px; }
.navbtn { height: 22px; margin: 1px 0 0; padding: 0; border: 1px solid #a5a5a5; background: #f0f0f0; text-align: center; line-height: 18px; color: #222; flex: none; width: 197px; }
.navbtn:nth-of-type(1) { margin-top: 2px; }
.navbtn.second { margin-top: 0; }
.expand { height: 27px; display: flex; align-items: center; padding: 2px 0 0 7px; gap: 6px; background: #f9f9f9; flex: none; }
.pm { width: 18px; height: 16px; }
.tree { height: 486px; flex: none; border: 1px solid #8c8c8c; border-width: 1px 0 1px 1px; margin-left: 2px; background: #fff; display: flex; overflow: hidden; }
.rows { flex: 1; padding-top: 1px; overflow: hidden; font-family: "Noto Sans CJK SC", sans-serif; }
.row { height: 16px; display: flex; align-items: center; padding-left: 12px; white-space: nowrap; }
.row > span { margin-left: 4px; padding: 0 1px 0 0; height: 16px; }
.row.l1 { padding-left: 6px; }
.row.l1 > span { margin-left: 5px; }
.gut { width: 19px; height: 16px; border-left: 1px dotted #777; }
.gut.none { border: 0; }
.elbow { width: 12px; height: 16px; display: flex; flex-direction: column; }
.elbow::before { content: ""; height: 8px; border-left: 1px dotted #777; border-bottom: 1px dotted #777; }
.elbow::after { content: ""; flex: 1; border-left: 1px dotted #777; }
.elbow.last::after { border: 0; }
.elbow.wide { width: 29px; }
.ti { width: 16px; height: 16px; }
.sel { background: #d8d8d8; margin-left: 3px !important; padding: 0 4px 0 1px !important; width: 62px; }
.chev { width: 14px; height: 16px; flex: none; }
.chev::before { content: ""; display: block; width: 5px; height: 5px; margin: 3px 0 0 4px; border: solid #555; border-width: 0 2px 2px 0; transform: rotate(45deg); }
.chev.closed::before { border-color: #aaa; transform: rotate(-45deg); margin: 5px 0 0 3px; }
.dash { width: 6px; border-top: 1px dotted #777; }
.vscroll { display: flex; flex-direction: column; align-items: center; background: #f0f0f0; flex: none; }
.arrow { width: 10px; height: 8px; margin: 5px 0; flex: none; }
.track { flex: 1; width: 100%; display: flex; flex-direction: column; min-height: 0; overflow: hidden; }
.thumb { width: 100%; background: #cdcdcd; flex: none; }
.tree-sb { width: 16px; }
.tree-thumb { height: 292px; margin-top: 137px; }
.low { margin-top: 2px; height: 21px; line-height: 17px; }
.low + .low { margin-top: 1px; height: 22px; }

.right { flex: 1; display: flex; flex-direction: column; min-width: 0; }
.toolbar2 { height: 28px; display: flex; align-items: center; padding-left: 11px; gap: 6px; background: #f6f6f6; white-space: nowrap; flex: none; }
.toolbar2 .tool { gap: 4px; }
.toolbar2 .tool .caret { margin-left: 0; }
.toolbar2 .g6 { gap: 6px; }
.toolbar2 .g6 .caret { margin-left: -3px; }
.toolbar2 .g2 { gap: 2px; }
.toolbar2 .g4 { gap: 4px; }
.toolbar2 .g7 { gap: 7px; }
.toolbar2 .g3 { gap: 3px; }
.ml2 { margin-left: 2px; }
.ml3 { margin-left: 3px; }
.sa1 { margin: 0 -4px 0 2px; }
.sa2 { margin: 0 -2px 0 -2px; }
.sa3 { margin-left: -5px; }
.sa4 { margin: 0 -2px 0 2px; }
.sa5 { margin-left: 1px; }
.sa6 { margin-left: 2px; }
.plain { display: flex; align-items: center; }
.plain .caret { margin-left: 3px; }
.floorsel { width: 63px; height: 23px; background: #fff; display: flex; align-items: center; padding-left: 2px; }
.floorsel .caret { margin-left: 17px; }
.ic12 { width: 12px; height: 14px; }
.rn { font: bold 9px "Liberation Sans", sans-serif; fill: #333; }
.rn.blue { fill: #2a5fb0; font-size: 11px; }
.sa { font: bold 11px "Liberation Serif", serif; fill: #2a5fb0; }

.panes { flex: 1; display: flex; min-height: 0; background: #f0f0f0; padding: 3px 6px 3px 8px; gap: 8px; }
.midpane { width: 165px; border: 2px solid #9a9a9a; border-top-width: 1px; display: flex; flex-direction: column; justify-content: flex-end; background: #fff; flex: none; }
.midlist { flex: 1; display: flex; min-height: 0; }
.midrows { flex: 1; display: flex; flex-direction: column; justify-content: flex-end; min-width: 0; padding-bottom: 13px; }
.midrow { height: 16px; display: flex; align-items: center; padding-left: 28px; font: 10.500px/16px "Liberation Mono", monospace; white-space: nowrap; flex: none; }
.ic14 { width: 14px; height: 14px; }
.midrow > span { margin-left: 6px; }
.midrow > .midsel { flex: 1; height: 16px; background: #2a5fbf; color: #fff; margin-left: 0; padding-left: 2px; display: flex; align-items: center; gap: 3px; overflow: hidden; }
.mid-sb { width: 17px; background: #f0f0f0; }
.mid-thumb { height: 500px; }
.hscroll { height: 16px; display: flex; align-items: center; background: #f0f0f0; padding: 0 0 0 3px; flex: none; }
.harrow { width: 8px; height: 10px; }
.hthumb { width: 108px; height: 15px; background: #cdcdcd; margin: 0 7px; }
.canvaspane { flex: 1; background: #fff; border: 2px solid #a0a0a0; }

.status { height: 21px; display: flex; gap: 3px; padding-top: 1px; background: #f0f0f0; flex: none; white-space: nowrap; }
.status span { border: 1px solid #dcdcdc; border-top-color: #c8c8c8; padding-left: 2px; line-height: 17px; height: 20px; }
.s0 { width: 147px; }
.s1 { width: 77px; }
.s2 { width: 97px; }
.s3 { width: 47px; }
.s4 { width: 913px; }
.s5 { flex: 1; }

.taskbar { height: 40px; background: #0b1115; display: flex; flex: none; color: #fff; }
.start { width: 48px; background: #000; display: flex; align-items: center; justify-content: center; }
.win { width: 16px; height: 16px; }
.search { width: 344px; background: #333; display: flex; align-items: center; padding-left: 10px; color: #a6a6a6; font-size: 13px; }
.cortana { width: 21px; height: 21px; border: 3px solid #ddd; border-radius: 50%; margin-right: 5px; }
.mic { width: 12px; height: 18px; margin-left: auto; margin-right: 14px; }
.tasks { display: grid; grid-template-columns: 51px 48px 60px 36px 64px 42px 48px 50px 48px; }
.task { display: flex; align-items: center; justify-content: center; border-bottom: 2px solid transparent; }
.task.run { border-bottom-color: #76b9ed; }
.task.act { background: #38393b; }
.tk { width: 24px; height: 24px; }
.tray { flex: 1; display: flex; align-items: center; padding-left: 159px; }
.cpu { width: 54px; display: flex; flex-direction: column; align-items: center; line-height: 15px; white-space: nowrap; flex: none; }
.ty { width: 15px; height: 15px; margin-left: 10px; }
.ty.car { margin-left: 15px; }
.ty.big { height: 20px; width: 16px; }
.ty.nv { margin-left: 7px; }
.ime-lang { margin-left: 8px; font-size: 14px; }
.clock { width: 60px; margin-left: 17px; display: flex; flex-direction: column; align-items: center; line-height: 15px; flex: none; }
.notif { position: relative; margin-left: 6px; }
.badge { position: absolute; right: -9px; bottom: -7px; width: 16px; height: 16px; border-radius: 50%; background: #222; border: 1px solid #777; color: #fff; font: bold 11px/14px "Liberation Sans", sans-serif; text-align: center; }

.score { position: absolute; left: 1084px; top: -25px; width: 43px; height: 43px; border-radius: 50%; background: #3fba50; border: 2px solid #e4e4e4; box-shadow: 0 2px 5px rgba(0,0,0,.45); color: #fff; font: bold 11px/1 "Liberation Sans", sans-serif; display: flex; align-items: flex-end; justify-content: center; padding-bottom: 5px; }

.backwin { position: absolute; left: 537px; top: 98px; width: 501px; height: 16px; background: linear-gradient(#aebdcb, #c8d3dc); border: 1px solid #555; border-bottom: 0; padding: 4px 0 0 7px; color: #8a96a2; line-height: 14px; overflow: hidden; }

.dialog { position: absolute; left: 192px; top: 112px; width: 982px; height: 535px; background: #f0f0f0; border: 1px solid #1e88e0; box-shadow: 0 6px 28px rgba(0,0,0,.38); display: flex; flex-direction: column; }
.d-title { height: 30px; background: #fff; display: flex; align-items: center; padding-left: 8px; flex: none; }
.d-name { margin-left: 6px; }
.d-ctl { margin-left: auto; display: flex; gap: 34px; margin-right: 17px; }
.dc { width: 12px; height: 12px; fill: none; stroke: #111; }
.d-body { height: 465px; display: flex; flex: none; }
.d-left { width: 290px; border-right: 2px solid #a6a6a6; display: flex; flex-direction: column; flex: none; overflow: hidden; }
.group-label { height: 20px; flex: none; display: flex; align-items: flex-start; padding: 1px 0 0 8px; color: #222; }
.group-label i { flex: 1; height: 1px; background: #d8d8d8; margin: 7px 0 0 2px; }
.thumbwrap { flex: 1; display: flex; min-height: 0; padding-left: 6px; }
.thumbs { width: 259px; display: grid; grid-template-columns: 128px 128px; grid-auto-rows: 144px; gap: 4px 3px; overflow: hidden; align-content: start; }
.card { border: 1px solid; border-color: #e4e4e4 #c6c6c6 #c6c6c6 #e4e4e4; background: #f6f6f6; padding: 2px; display: flex; }
.card.on { border: 0; padding: 1px; }
.shape { width: 122px; height: 139px; background: #6d94aa; }
.card.on .shape { width: 126px; height: 142px; border: 2px solid #00ffff; }
.dlg-sb { width: 15px; margin-left: 5px; }
.dlg-thumb { height: 158px; }
.d-right { flex: 1; display: flex; flex-direction: column; padding: 2px 1px 0 1px; min-width: 0; }
.radios { height: 30px; flex: none; border: 1px solid #d8d8d8; border-bottom: 1px solid #a6a6a6; display: flex; align-items: center; padding: 2px 0 0 170px; gap: 134px; }
.radio { display: flex; align-items: center; gap: 3px; }
.dot { width: 12px; height: 12px; border: 1px solid #444; border-radius: 50%; background: #fff; display: flex; align-items: center; justify-content: center; }
.dot.on::before { content: ""; width: 8px; height: 8px; border-radius: 50%; background: #222; }
.cad { width: 686px; height: 432px; background: #000; margin-left: 1px; }
.w, .w path { fill: none; stroke: #fff; }
.ye2 { fill: none; stroke: #ffff00; stroke-width: 2; }
.ma { fill: none; stroke: #ff00ff; stroke-width: 2; }
.cy { fill: none; stroke: #00ffff; stroke-width: 2; }
.cydots { stroke: #00ffff; stroke-width: 3; fill: none; }
.yedots { stroke: #ffff00; stroke-width: 3; fill: none; }
.g { fill: #00ff00; }
.sm { font: 11px "Liberation Sans", sans-serif; }
.mono12 { font: 11px "Liberation Mono", monospace; letter-spacing: -.6px; }
.s30 { font: 30px "Liberation Serif", serif; fill: #fff; }
.cn { font-family: "Noto Sans CJK SC", sans-serif; fill: #fff; }
.cn.big { font-size: 29px; font-weight: 300; }
.cn.mid { font-size: 23.500px; }
.cn.sm12 { font-size: 12px; }

.ye { fill: none; stroke: #ffff00; stroke-width: 3; }
.wh { fill: none; stroke: #fff; stroke-width: 4; }
.wh.thin { stroke-width: 2.500; }
.wc2 { fill: none; stroke: #fff; stroke-width: 3; }
.bk { fill: none; stroke: #000; stroke-width: 4; }
.dk { fill: none; stroke: #3e5463; stroke-width: 4; }
.ah { fill: #26343e; }
.ol { fill: none; stroke: #a9ae5e; stroke-width: 4; }
.ol.hl { stroke-width: 2.500; }
.lbl-w { fill: #fff; }
.mono { font-family: "Liberation Mono", monospace; }
.serif { font-family: "Liberation Serif", serif; }
.lbl-p { fill: #38307e; font-family: "Noto Sans CJK SC", sans-serif; }
.lbl-t { fill: #3d3782; font-family: "Noto Sans CJK SC", sans-serif; }

.d-foot { flex: 1; display: flex; align-items: flex-start; border-top: 1px solid #a6a6a6; padding: 8px 26px 0 337px; }
.dbtn { width: 89px; height: 25px; background: #e1e1e1; border: 1px solid #adadad; padding: 0; }
.dbtn.primary { border: 2px solid #0f78d2; background: #e5f1fb; }
.d-actions { margin-left: auto; display: flex; gap: 15px; }

.imebar { position: absolute; left: 602px; top: 690px; height: 27px; display: flex; align-items: center; gap: 6px; width: 185px; padding-left: 30px; }
.imebar::before { content: ""; position: absolute; left: 18px; right: 0; top: 3px; bottom: 0; background: #fff; border: 1px solid #b9cfe2; }
.sg { position: absolute; left: 0; top: 0; width: 28px; height: 28px; z-index: 1; }
.imechar { position: relative; color: #1d78c8; font-weight: bold; font-size: 13px; margin-left: 5px; }
.imechar.small { margin-left: 2px; width: 22px; }
.ib { position: relative; width: 16px; height: 16px; margin-right: 1px; }
```
